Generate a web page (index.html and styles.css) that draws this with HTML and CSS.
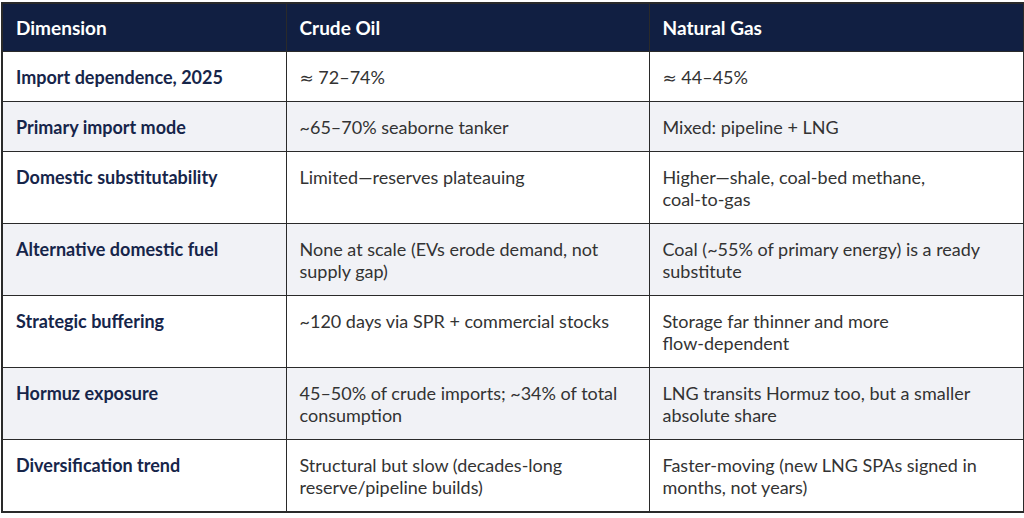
FILE: index.html
```html
<!DOCTYPE html>
<html lang="en">
<head>
<meta charset="utf-8">
<title>Crude Oil vs Natural Gas</title>
<link rel="stylesheet" href="styles.css">
</head>
<body>
<table class="cmp">
  <colgroup>
    <col class="c1"><col class="c2"><col class="c3">
  </colgroup>
  <thead>
    <tr><th>Dimension</th><th>Crude Oil</th><th>Natural Gas</th></tr>
  </thead>
  <tbody>
    <tr><td class="dim">Import dependence, 2025</td><td><span class="sym">≈</span> 72–74%</td><td><span class="sym">≈</span> 44–45%</td></tr>
    <tr class="alt"><td class="dim">Primary import mode</td><td>~65–70% seaborne tanker</td><td>Mixed: pipeline + LNG</td></tr>
    <tr><td class="dim">Domestic substitutability</td><td>Limited—reserves plateauing</td><td>Higher—shale, coal-bed methane, <span class="nw">coal-to-gas</span></td></tr>
    <tr class="alt"><td class="dim">Alternative domestic fuel</td><td>None at scale (EVs erode demand, not supply gap)</td><td>Coal (~55% of primary energy) is a ready substitute</td></tr>
    <tr><td class="dim">Strategic buffering</td><td>~120 days via SPR + commercial stocks</td><td>Storage far thinner and more <span class="nw">flow-dependent</span></td></tr>
    <tr class="alt"><td class="dim">Hormuz exposure</td><td>45–50% of crude imports; ~34% of total consumption</td><td>LNG transits Hormuz too, but a smaller absolute share</td></tr>
    <tr><td class="dim">Diversification trend</td><td>Structural but slow (decades-long reserve/pipeline builds)</td><td>Faster-moving (new LNG SPAs signed in months, not years)</td></tr>
  </tbody>
</table>
</body>
</html>
```

FILE: styles.css
```css
html, body {
  margin: 0;
  padding: 0;
  background: #ffffff;
}
body {
  padding: 2px 1px 0 1px;
  font-family: Lato, "Open Sans", sans-serif;
}
.cmp {
  border-collapse: collapse;
  width: 1022px;
  table-layout: fixed;
  border: 2px solid #2a2a2a;
}
.c1 { width: 284px; }
.c2 { width: 363px; }
.c3 { width: 375px; }
.cmp th, .cmp td {
  border: 1px solid #2a2a2a;
  text-align: left;
  vertical-align: top;
  padding: 14px 13px 13px 13px;
  font-size: 18px;
  line-height: 22px;
}
.cmp th {
  background: #111f42;
  color: #ffffff;
  font-weight: 700;
  font-size: 19px;
  padding-top: 13px;
  padding-bottom: 12px;
}
.cmp td {
  color: #333333;
  font-weight: 400;
}
.cmp td.dim {
  color: #16254a;
  font-weight: 700;
}
.cmp tr.alt td {
  background: #f1f2f6;
}
.nw {
  white-space: nowrap;
}
.sym {
  font-family: "DejaVu Sans", sans-serif;
  font-size: 17px;
  line-height: 10px;
}
```
